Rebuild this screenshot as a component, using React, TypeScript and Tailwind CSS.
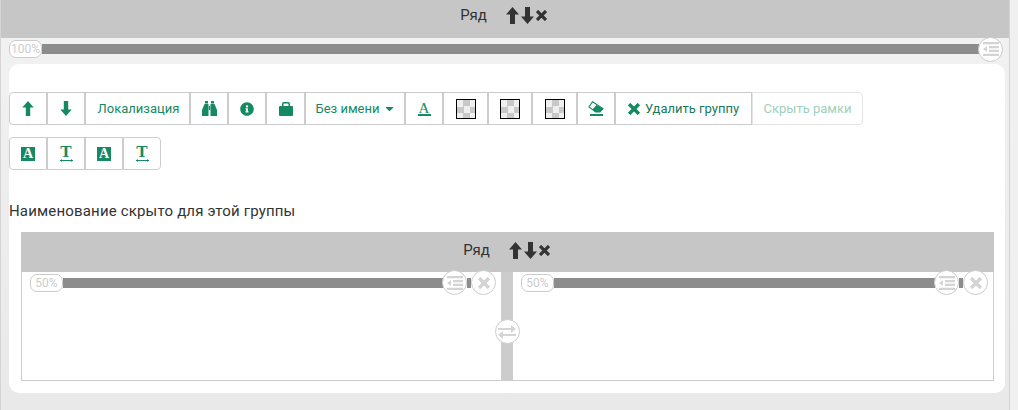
import React from "react";
import { FaInfoCircle, FaCaretDown } from "react-icons/fa";

const btn = "flex h-[33px] shrink-0 items-center justify-center border border-[#ccc] bg-white text-[13px] leading-none";
const green = "text-[#158a62]";

function Up({ w = 13, h = 17 }: { w?: number; h?: number }) {
  return (
    <svg width={w} height={h} viewBox="0 0 13 17" fill="currentColor">
      <path d="M6.5 0L13 7.5H9V17H4V7.5H0z" />
    </svg>
  );
}

function Down({ w = 13, h = 17 }: { w?: number; h?: number }) {
  return (
    <svg width={w} height={h} viewBox="0 0 13 17" fill="currentColor">
      <path d="M4 0H9V9.5H13L6.5 17L0 9.5H4z" />
    </svg>
  );
}

function Cross({ size = 11 }: { size?: number }) {
  return (
    <svg width={size} height={size} viewBox="0 0 11 11" fill="none" stroke="currentColor" strokeWidth="3.2">
      <path d="M1 1L10 10M10 1L1 10" />
    </svg>
  );
}

function Lines() {
  return (
    <svg width="16" height="14" viewBox="0 0 16 14" fill="currentColor">
      <path d="M0 0h16v2.200H0zM6 4h10v2.200H6zM6 7.800h10V10H6zM0 11.800h16V14H0zM4 4v6L0 7z" />
    </svg>
  );
}

function Transfer() {
  return (
    <svg width="18" height="14" viewBox="0 0 18 14" fill="currentColor">
      <path d="M0 3h13V0l5 4-5 4V5H0zM18 9H5V6L0 10l5 4v-3h13z" />
    </svg>
  );
}

function Lock() {
  return (
    <svg width="14" height="15" viewBox="0 0 14 15" fill="currentColor">
      <path d="M3 5V3a2 2 0 0 1 2-2h4a2 2 0 0 1 2 2v2H9.500V3.300a.8.8 0 0 0-.8-.8H5.300a.8.8 0 0 0-.8.800V5z" />
      <rect x="0" y="5" width="14" height="10" rx="1" />
    </svg>
  );
}

function Binoculars() {
  return (
    <svg width="15" height="15" viewBox="0 0 15 15" fill="currentColor">
      <path d="M3 0h3v2.500H3zM9 0h3v2.500H9zM2.500 3H6.500V15H0V9zM8.500 3H12.500L15 9v6H8.500zM6.900 5h1.200v4H6.900z" />
    </svg>
  );
}

function Eraser() {
  return (
    <svg width="16" height="12" viewBox="0 0 16 12">
      <path d="M4.500.7L15 7.500 12 11H7.500L1 6z" fill="#fff" stroke="currentColor" strokeWidth="1.100" />
      <path d="M8.500 4L15 7.500 12 11H7.500L4.500 8.500z" fill="currentColor" />
    </svg>
  );
}

function Arrows() {
  return (
    <span className="flex items-center gap-[2px] text-[#333]">
      <Up />
      <Down />
      <Cross />
    </span>
  );
}

function Circle({ children, className = "" }: { children: React.ReactNode; className?: string }) {
  return (
    <span className={"z-10 flex h-[25px] w-[25px] shrink-0 items-center justify-center rounded-full border border-[#ccc] bg-white text-[#d4d4d4] " + className}>
      {children}
    </span>
  );
}

function Pill({ label }: { label: string }) {
  return (
    <span className="z-10 flex h-[18px] w-[33px] shrink-0 items-center justify-center rounded-[7px] border border-[#ccc] bg-white text-[12px] text-[#ccc]">
      {label}
    </span>
  );
}

function Checker() {
  return (
    <span className="block h-[20px] w-[20px] border border-black bg-[repeating-conic-gradient(#c8c8c8_0_25%,#efefef_0_50%)] bg-[length:13px_13px]" />
  );
}

function BoxA() {
  return (
    <span className="flex h-[14px] w-[14px] items-center justify-center bg-[#158a62] font-['Liberation_Serif',serif] text-[14px] font-bold text-white">A</span>
  );
}

function WidthT() {
  return (
    <span className="flex flex-col items-center leading-none">
      <span className="font-['Liberation_Serif',serif] text-[17px] font-bold leading-[12px]">T</span>
      <svg width="13" height="3" viewBox="0 0 13 3" className="mt-[1px]">
        <path d="M0 1.500h13" stroke="currentColor" strokeWidth="1" />
        <path d="M0 1.500l2-1.500v3zM13 1.500l-2-1.500v3z" fill="currentColor" />
      </svg>
    </span>
  );
}

function Column({ w, gap }: { w: string; gap: string }) {
  return (
    <div className={"flex h-[108px] shrink-0 items-start " + w}>
      <div className="-mt-[2px] flex w-full items-center pl-2 pr-[5px]">
        <Pill label="50%" />
        <span className="h-[10px] flex-1 bg-[#8c8c8c]" />
        <Circle className="-ml-px"><Lines /></Circle>
        <span className={"h-[10px] bg-[#8c8c8c] " + gap} />
        <Circle><Cross size={12} /></Circle>
      </div>
    </div>
  );
}

export default function App() {
  return (
    <div className="h-[410px] w-[1018px] overflow-hidden bg-[#f0f0f0] font-['Roboto','Noto_Sans',sans-serif] text-[#333]">
      <div className="h-[410px] w-[1010px] border-r border-[#d4d4d4] border-l border-l-[#d4d4d4] bg-gradient-to-b from-[#f2f2f2] to-[#e9e9e9]">
        <div className="flex h-[38px] items-center justify-center gap-[19px] bg-[#c6c6c6] pb-[8px] pr-[3px] text-[15px]">
          <span>Ряд</span>
          <Arrows />
        </div>
        <div className="flex h-[26px] items-center pb-[4px] pl-[8px]">
          <Pill label="100%" />
          <span className="h-[10px] flex-1 bg-[#8c8c8c]" />
          <Circle className="-ml-px mr-[6px]"><Lines /></Circle>
        </div>
        <div className="ml-[8px] h-[329px] w-[996px] rounded-[10px] bg-white pt-7">
          <div className={"flex " + green}>
            <span className={btn + " w-[38px] rounded-l-[4px]"}><Up w={12} h={15} /></span>
            <span className={btn + " w-[38px]"}><Down w={12} h={15} /></span>
            <span className={btn + " w-[105px] pl-[2px]"}>Локализация</span>
            <span className={btn + " w-[38px]"}><Binoculars /></span>
            <span className={btn + " w-[38px]"}><FaInfoCircle size={14} /></span>
            <span className={btn + " w-[39px]"}><Lock /></span>
            <span className={btn + " w-[100px] gap-1 pl-[2px]"}>Без имени<FaCaretDown size={13} /></span>
            <span className={btn + " w-[38px]"}>
              <span className="flex flex-col items-center font-['Liberation_Serif',serif] text-[15px] leading-[12px]">A<span className="h-[2px] w-[13px] bg-[#158a62]" /></span>
            </span>
            <span className={btn + " w-[45px]"}><Checker /></span>
            <span className={btn + " w-[44px]"}><Checker /></span>
            <span className={btn + " w-[45px]"}><Checker /></span>
            <span className={btn + " w-[38px]"}>
              <span className="flex flex-col items-center"><Eraser /><span className="mt-[1px] h-[2px] w-[13px] bg-[#158a62]" /></span>
            </span>
            <span className={btn + " w-[137px] gap-[5px]"}><Cross size={12} /><span className="text-[#1a7a5c]">Удалить группу</span></span>
            <span className="flex h-[33px] w-[111px] shrink-0 items-center justify-center rounded-r-[4px] border border-[#e4e4e4] bg-white text-[13px] leading-none text-[#9dd0bd]">Скрыть рамки</span>
          </div>
          <div className={"mt-3 flex " + green}>
            <span className={btn + " w-[38px] rounded-l-[4px]"}><BoxA /></span>
            <span className={btn + " w-[38px]"}><WidthT /></span>
            <span className={btn + " w-[38px]"}><BoxA /></span>
            <span className={btn + " w-[38px] rounded-r-[4px]"}><WidthT /></span>
          </div>
          <p className="mt-[31px] text-[15px] leading-5 tracking-[0.17px]">Наименование скрыто для этой группы</p>
          <div className="ml-3 mt-[11px] w-[973px] border-x border-b border-[#ccc]">
            <div className="-mx-px flex h-[40px] items-center justify-center gap-[19px] bg-[#c6c6c6] pb-[4px] pr-[2px] text-[15px]">
              <span>Ряд</span>
              <Arrows />
            </div>
            <div className="flex">
              <Column w="w-[479px]" gap="w-[4px]" />
              <div className="relative h-[108px] w-3 shrink-0 bg-[#ccc]">
                <Circle className="absolute left-[-6.5px] top-[47px]"><Transfer /></Circle>
              </div>
              <Column w="w-[480px]" gap="w-[4px]" />
            </div>
          </div>
        </div>
      </div>
    </div>
  );
}
